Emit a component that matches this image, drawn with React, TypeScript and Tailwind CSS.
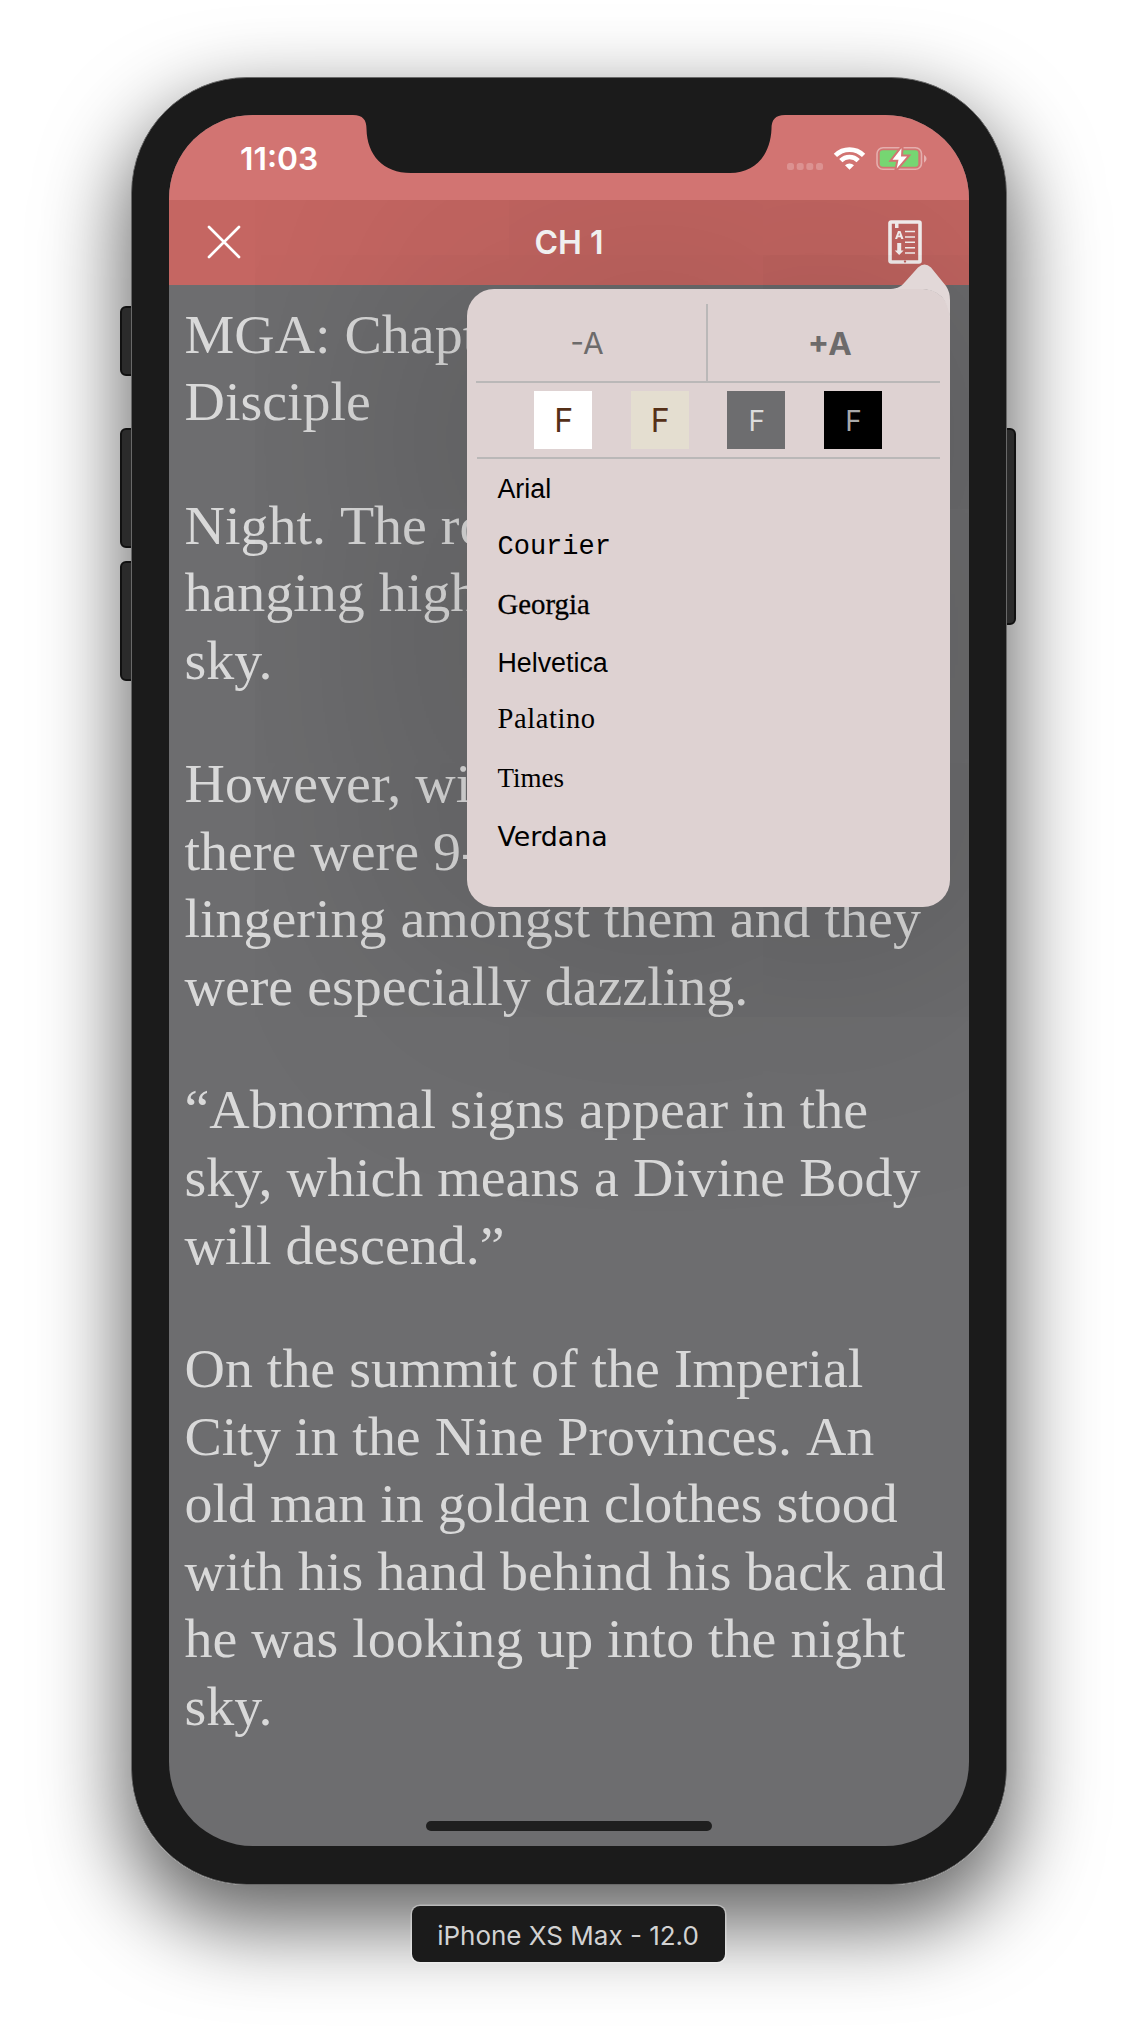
import React from "react";

const paragraphs: string[][] = [
  ["MGA: Chapt", "Disciple"],
  ["Night. The ro", "hanging high", "sky."],
  ["However, wi", "there were 9-", "lingering amongst them and they", "were especially dazzling."],
  ["“Abnormal signs appear in the", "sky, which means a Divine Body", "will descend.”"],
  ["On the summit of the Imperial", "City in the Nine Provinces. An", "old man in golden clothes stood", "with his hand behind his back and", "he was looking up into the night", "sky."],
];

const swatches = [
  "bg-white text-[#553018] text-[32px]",
  "bg-[#e4ded0] text-[#553018] text-[32px]",
  "bg-[#6d6d6f] text-[#dcdcdc] text-[28px]",
  "bg-black text-[#a9a9a9] text-[28px]",
];

const fonts = [
  { name: "Arial", cls: "h-[57px] font-['Liberation_Sans',sans-serif] text-[26.8px]" },
  { name: "Courier", cls: "h-[58px] font-['Liberation_Mono',monospace] text-[27px]" },
  { name: "Georgia", cls: "h-[58px] font-['Liberation_Serif',serif] text-[28.8px] [-webkit-text-stroke:0.3px_black]" },
  { name: "Helvetica", cls: "h-[58px] font-['Liberation_Sans',sans-serif] text-[26.8px]" },
  { name: "Palatino", cls: "h-[55px] font-['Liberation_Serif',serif] text-[28.5px] tracking-[0.6px]" },
  { name: "Times", cls: "h-[62px] font-['Liberation_Serif',serif] text-[27px]" },
  { name: "Verdana", cls: "h-[56px] font-['DejaVu_Sans',sans-serif] text-[26.8px]" },
];

function StatusIcons() {
  return (
    <svg width="142" height="26" viewBox="0 0 142 26" className="mt-[30px]">
      <g fill="#fff" fillOpacity=".22">
        <rect x="0" y="18" width="7" height="7" rx="2.5" />
        <rect x="9.7" y="18" width="7" height="7" rx="2.5" />
        <rect x="19.3" y="18" width="7" height="7" rx="2.5" />
        <rect x="29" y="18" width="7" height="7" rx="2.5" />
      </g>
      <g fill="none" stroke="#fff" strokeWidth="4.6">
        <path d="M48.4 10.4a20 20 0 0 1 28.2 0" />
        <path d="M53.8 15.6a12.4 12.4 0 0 1 17.4 0" />
      </g>
      <path d="M62.5 24.8 58 20.3a6.5 6.5 0 0 1 9 0z" fill="#fff" />
      <rect x="90" y="2.7" width="44.5" height="21.6" rx="6" fill="none" stroke="#fff" strokeOpacity=".42" strokeWidth="1.6" />
      <path d="M137 9.7q5 4 0 8z" fill="#fff" fillOpacity=".45" />
      <rect x="92.8" y="5.3" width="38.5" height="16.5" rx="3" fill="#76d672" />
      <path d="M114.500 3.200 105.500 14.800h6l-1.800 8.800 10.300-12h-6z" fill="#fff" stroke="#d27472" strokeWidth="4" paintOrder="stroke" />
    </svg>
  );
}

function ReaderIcon() {
  return (
    <svg width="34" height="44" viewBox="0 0 34 44" fill="#fbf6f6" className="-mt-[2px]">
      <rect x="2" y="2" width="30" height="40" rx="1" fill="none" stroke="#fbf6f6" strokeWidth="3.600" />
      <path d="M7 3h3.500v5H7z" />
      <path d="M15.700 41.500 17 40l1.300 1.500L17 43z" fill="#c4625f" />
      <path fillRule="evenodd" d="M7 19 10 11h2.500l3 8h-2.300l-.6-1.800H9.800L9.200 19zm3.400-3.500H12L11.200 13z" />
      <path d="M9.200 23h4v7.500h2.400L11.200 35l-4.500-4.500h2.500z" />
      <path d="M17 11.500h10M17 17h10M17 22.300h10M17 27.700h10M17 33h10" stroke="#fbf6f6" strokeWidth="1.500" />
    </svg>
  );
}

function Popover() {
  return (
    <div className="absolute left-[298px] top-[89px] h-[618px] w-[482.500px] rounded-[27px] bg-[#ded2d2] shadow-[0_0_280px_60px_rgba(0,0,0,0.17)]">
      <svg width="62" height="56" viewBox="0 0 62 56" className="absolute -top-[25px] right-0" fill="#e2d8d8">
        <path d="M0 25C8 25 12 24 17 18L30 3.5Q36.500 -2.500 43 3.500L58 22Q62 28 62 36V56Q60 25 32 25Z" />
      </svg>
      <div className="ml-[9px] mr-[10px] flex h-[94px] border-b-2 border-[#bab8b8] pt-[15px] text-[#6d6b6b]">
        <div className="flex w-[232px] items-center justify-center border-r-2 border-[#bab8b8] pr-2 pt-0.5 text-[30px]">-A</div>
        <div className="flex flex-1 items-center justify-center pl-3 pt-0.5 text-[31.500px] font-bold">+A</div>
      </div>
      <div className="ml-[9.500px] mr-[10px] flex h-[76px] items-center justify-center gap-[38.600px] border-b-2 border-[#bab8b8]">
        {swatches.map((s) => (
          <div key={s} className={"flex size-[58px] items-center justify-center pl-px pt-px " + s}>F</div>
        ))}
      </div>
      <div className="flex flex-col pl-[30.500px] pt-[2px] text-black">
        {fonts.map((f) => (
          <div key={f.name} className={"flex items-center whitespace-nowrap " + f.cls}>{f.name}</div>
        ))}
      </div>
    </div>
  );
}

export default function App() {
  return (
    <div className="flex h-[2034px] w-[1138px] flex-col items-center overflow-hidden bg-white pt-[77px] font-[Inter,sans-serif]">
      <div className="relative h-[1808px] w-[876px] rounded-[116px] shadow-[0_34px_84px_6px_rgba(0,0,0,0.62)]">
        <div className="absolute -left-[11px] top-[229px] h-[70px] w-5 rounded-[6px] border-2 border-[#111] bg-[#2b2b2b]" />
        <div className="absolute -left-[11px] top-[351px] h-[120px] w-5 rounded-[6px] border-2 border-[#111] bg-[#2b2b2b]" />
        <div className="absolute -left-[11px] top-[484px] h-[120px] w-5 rounded-[6px] border-2 border-[#111] bg-[#2b2b2b]" />
        <div className="absolute -right-[9px] top-[351px] h-[197px] w-5 rounded-[6px] border-2 border-[#111] bg-[#2b2b2b]" />
        <div className="relative h-full w-full rounded-[116px] border border-[#696969] bg-[#1b1b1b] px-[37px] pt-[37px]">
          <div className="flex h-[1731px] w-[800px] flex-col overflow-hidden rounded-[84px] bg-[#6d6d6f]">
            <header className="flex h-[85px] shrink-0 items-start bg-[#d27472] pl-[71px]">
              <div className="mt-[24px] w-[109px] text-[31.800px] font-semibold leading-[40px] text-white">11:03</div>
              <svg width="438" height="58" viewBox="0 0 438 58" fill="#1b1b1b">
                <path d="M4 0C14 0 17.500 5 17.500 14C18 40 34 58 62 58H381C406 58 421.500 40 422.500 14C422.500 5 426 0 436 0Z" />
              </svg>
              <StatusIcons />
            </header>
            <div className="relative min-h-0 flex-1 overflow-hidden">
              <nav className="flex h-[85px] items-center justify-between bg-[#c56662] pl-[38px] pr-[47px]">
                <svg width="34" height="34" viewBox="0 0 34 34" stroke="#fff" strokeWidth="2.700" strokeLinecap="round" className="-mt-[2px]">
                  <path d="M2 2 32 32M32 2 2 32" />
                </svg>
                <h1 className="pl-[9px] pt-px text-[32px] font-semibold text-white">CH 1</h1>
                <ReaderIcon />
              </nav>
              <main className="pl-[15.500px] pt-[15.500px] font-['Liberation_Serif',serif] text-[55.950px] leading-[67.550px] text-[#d9d9d9]">
                {paragraphs.map((lines) => (
                  <p key={lines[0]} className="mb-[56px]">
                    {lines.map((line) => (
                      <span key={line} className={/\. [A-Z]/.test(line) ? "block whitespace-nowrap [font-kerning:none]" : "block whitespace-nowrap"}>{line}</span>
                    ))}
                  </p>
                ))}
              </main>
              <Popover />
            </div>
            <div className="relative -mt-[25px] mb-[15px] h-[10px] w-[286px] shrink-0 self-center rounded-full bg-[#1f1f1f]" />
          </div>
        </div>
      </div>
      <div className="relative mt-[21px] mr-[2px] flex h-[56px] w-[313px] items-center justify-center rounded-[8px] bg-[#1b1b1b] pt-[3px] text-[26px] text-[#d2d2d2] shadow-[0_0_0_1.500px_rgba(255,255,255,0.35)]">
        iPhone XS Max - 12.0
      </div>
    </div>
  );
}
